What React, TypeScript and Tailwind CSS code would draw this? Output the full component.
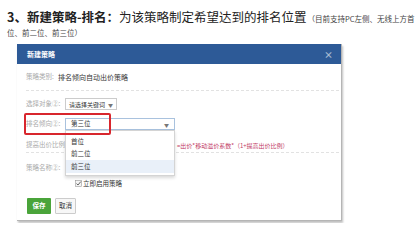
import React from 'react';

const font = { fontFamily: '"Noto Sans CJK SC", "Noto Sans", sans-serif' };

function Caret() {
  return <span className="text-[5px] leading-none text-[#777]">▼</span>;
}

export default function App() {
  return (
    <div
      className="relative w-[420px] h-[223px] overflow-hidden bg-white text-[#333]"
      style={font}
    >
      {/* Heading */}
      <div className="pl-[7px] pt-[7px]">
        <div className="flex items-end h-[19px] whitespace-nowrap">
          <span className="text-[12.5px] font-bold leading-[19px] text-[#222]">3、新建策略-排名：</span>
          <span className="text-[12.5px] leading-[19px] text-[#222]">为该策略制定希望达到的排名位置</span>
          <span className="ml-[1px] text-[7.5px] leading-[15px] text-[#444]">（目前支持PC左侧、无线上方首</span>
        </div>
        <div className="mt-[1px] text-[7.5px] leading-[12px] text-[#444]">位、前二位、前三位）</div>
      </div>

      {/* Dialog */}
      <div className="ml-[17px] mt-[5px] w-[325px] border-r border-b border-[#b5b5b5] bg-white shadow-[1px_2px_2px_rgba(0,0,0,0.25)]">
        <div className="flex h-[20px] items-center justify-between bg-[#2d5a97] pl-[10px] pr-[8px]">
          <span className="text-[7px] font-bold text-white">新建策略</span>
          <span className="text-[9px] font-bold leading-none text-[#a9bad3]">×</span>
        </div>

        <div className="pl-[9px] pr-[2px]">
          <div className="flex h-[27px] items-center border-b border-dashed border-[#e2e2e2]">
            <span className="w-[32px] whitespace-nowrap text-[6.5px] text-[#aaa]">策略类别:</span>
            <span className="whitespace-nowrap text-[7px] text-[#333]">排名倾向自动出价策略</span>
          </div>

          <div className="flex h-[26px] items-center">
            <span className="w-[39px] whitespace-nowrap text-[6.5px] text-[#aaa]">选择对象②:</span>
            <div className="flex h-[12px] w-[52px] items-center justify-between border border-[#ccc] px-[3px]">
              <span className="whitespace-nowrap text-[6px] text-[#333]">请选择关键词</span>
              <Caret />
            </div>
          </div>

          <div className="flex h-[14px] items-center">
            <span className="w-[39px] whitespace-nowrap text-[6.5px] text-[#aaa]">排名倾向②:</span>
            <div className="flex h-[12px] w-[110px] items-center justify-between border border-[#a9c2de] px-[5px]">
              <span className="whitespace-nowrap text-[6.5px] text-[#333]">第三位</span>
              <Caret />
            </div>
          </div>

          <div className="flex h-[22px] items-end border-b border-dashed border-[#e2e2e2] pb-[2px]">
            <span className="w-[151px] whitespace-nowrap text-[6.5px] text-[#aaa]">提高出价比例②:</span>
            <span className="whitespace-nowrap text-[6px] text-[#c23b66]">=出价*移动溢价系数*（1+提高出价比例）</span>
          </div>

          <div className="flex h-[24px] items-center pt-[6px]">
            <span className="w-[39px] whitespace-nowrap text-[6.5px] text-[#aaa]">策略名称②:</span>
          </div>

          <div className="flex h-[13px] items-center pl-[49px]">
            <svg width="7" height="7" viewBox="0 0 7 7" className="mr-[1px]">
              <rect x="0.5" y="0.5" width="6" height="6" fill="#f4f4f4" stroke="#999" strokeWidth="0.6" />
              <path d="M1.5 3.6 L3 5 L5.8 1.6" fill="none" stroke="#555" strokeWidth="0.9" />
            </svg>
            <span className="whitespace-nowrap text-[6.5px] text-[#333]">立即启用策略</span>
          </div>

          <div className="mt-[8px] flex gap-[4px] pb-[6px] pl-[1px]">
            <button className="flex h-[16px] w-[24px] items-center justify-center rounded-[1px] bg-[#4aa43a] text-[6.5px] font-bold text-white">
              保存
            </button>
            <button className="flex h-[16px] w-[21px] items-center justify-center rounded-[1px] border border-[#ccc] bg-[#f7f7f7] text-[6.5px] text-[#333]">
              取消
            </button>
          </div>
        </div>
      </div>

      {/* Open dropdown list */}
      <div className="absolute left-[65px] top-[130px] w-[110px] border border-[#d4d4d4] bg-white pt-[5px] pb-[2px] shadow-[0_2px_3px_rgba(0,0,0,0.15)]">
        <div className="flex h-[12px] items-center pl-[5px] text-[6.5px] text-[#333]">首位</div>
        <div className="flex h-[12px] items-center pl-[5px] text-[6.5px] text-[#333]">前二位</div>
        <div className="flex h-[13px] items-center bg-[#e9f0f9] pl-[5px] text-[6.5px] text-[#333]">前三位</div>
      </div>

      {/* Red annotation box */}
      <div className="absolute left-[24px] top-[113px] h-[22px] w-[87px] rounded-[2px] border-2 border-[#d8262d]" />
    </div>
  );
}
